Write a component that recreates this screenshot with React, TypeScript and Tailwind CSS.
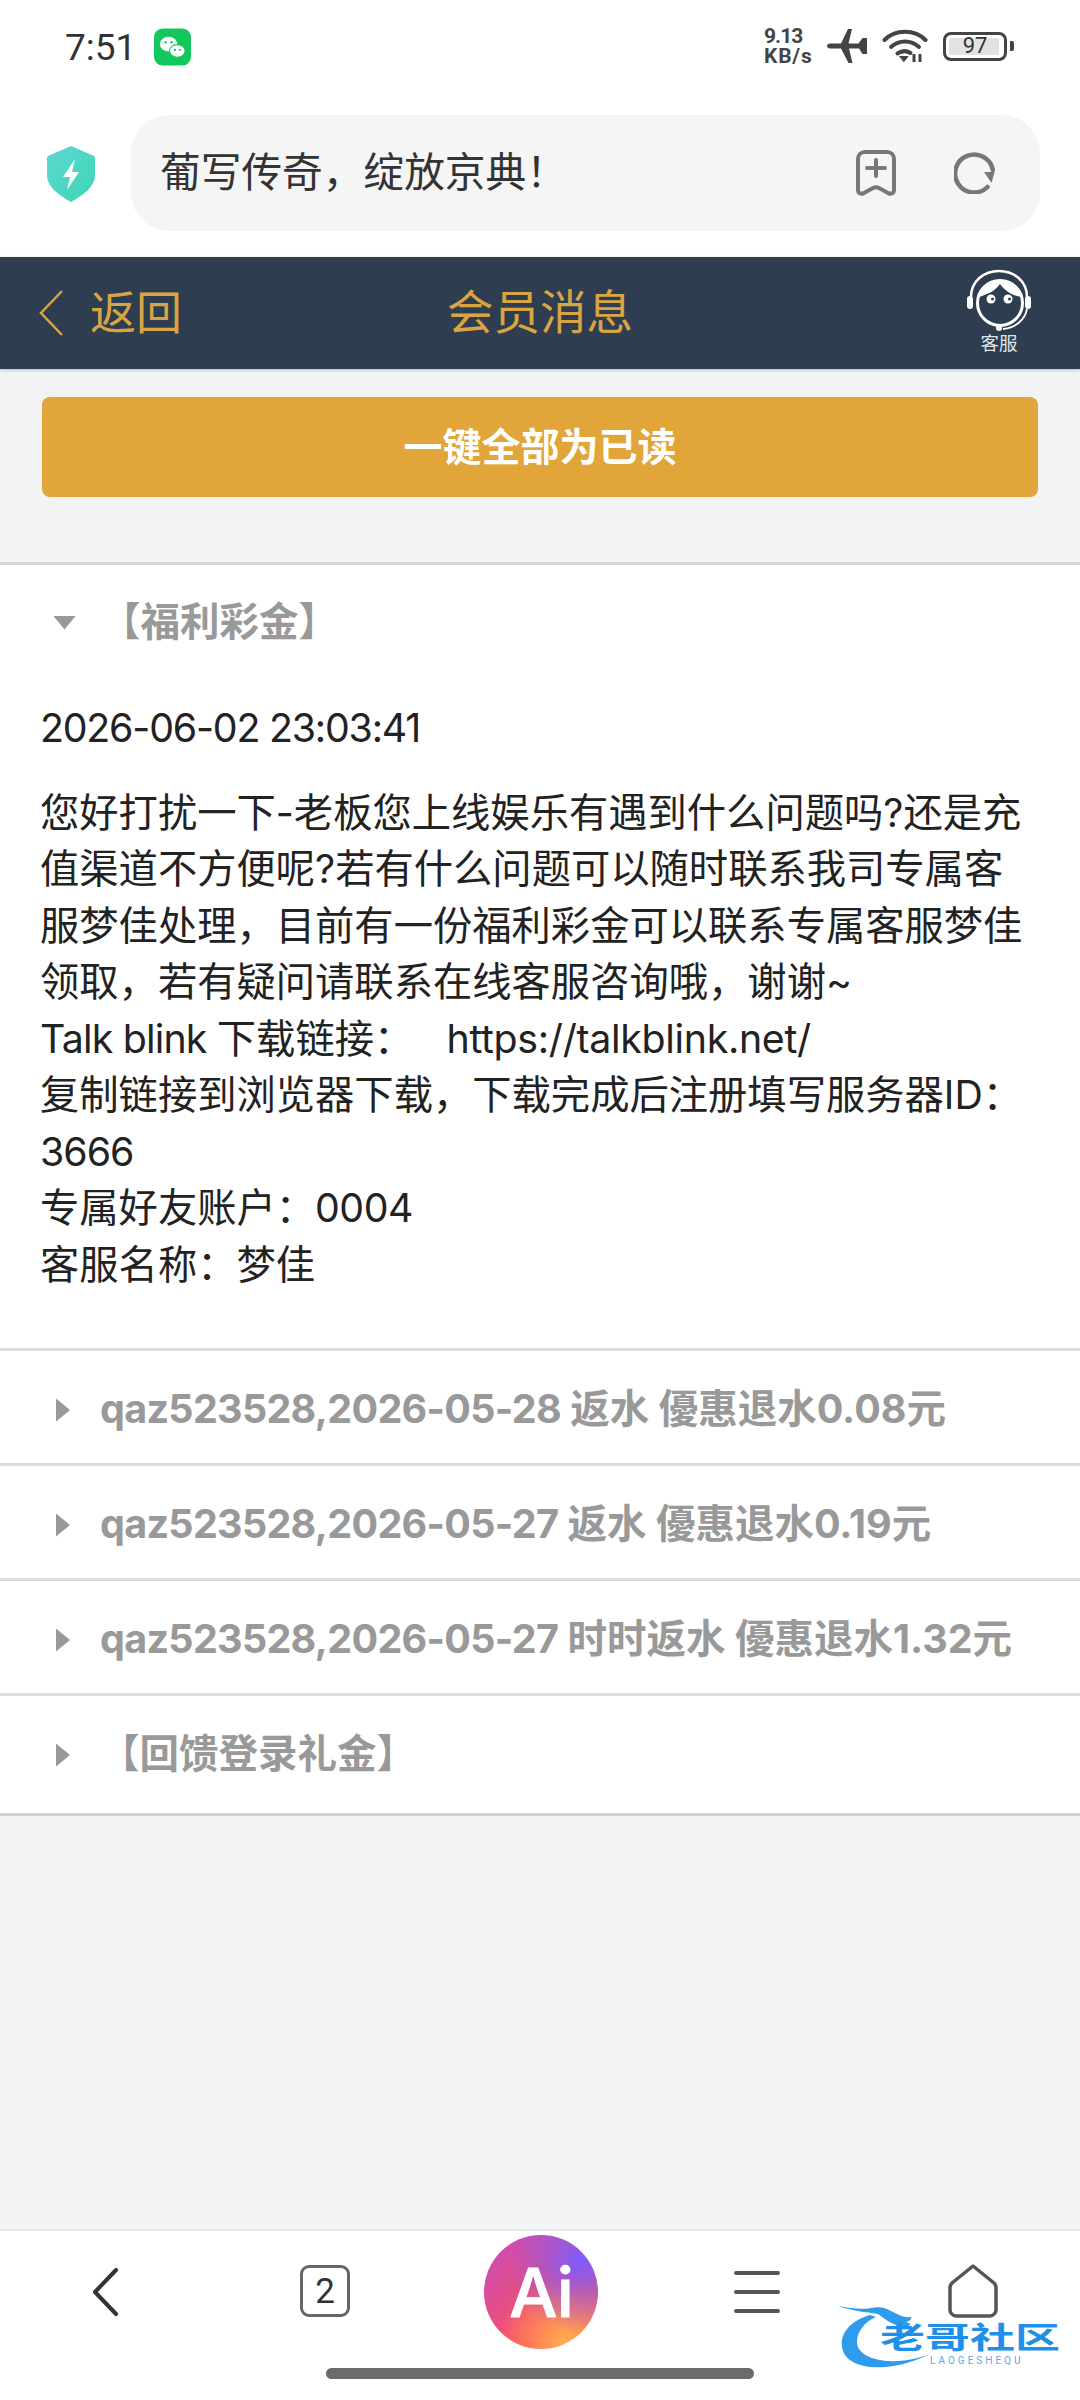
const cjk = "font-['Inter','Noto_Sans_CJK_SC',sans-serif]";

const rows = [
  { head: "qaz523528,2026-05-28", tail: " 返水 優惠退水0.08元" },
  { head: "qaz523528,2026-05-27", tail: " 返水 優惠退水0.19元" },
  { head: "qaz523528,2026-05-27", tail: " 时时返水 優惠退水1.32元" },
  { head: "", tail: "【回馈登录礼金】" },
];

const StatusBar = () => (
  <div className="h-[115px] shrink-0 flex items-start justify-between pl-[65px] pr-[66px] pt-[28px]">
    <div className="flex items-center gap-[18px] h-[38px]">
      <span className="text-[37px] leading-none text-[#333] font-['Roboto',sans-serif]">7:51</span>
      <svg width="37" height="38" viewBox="0 0 38 38">
        <rect width="38" height="38" rx="9" fill="#12c75c" />
        <ellipse cx="15" cy="16" rx="9" ry="7.500" fill="#fff" />
        <ellipse cx="24" cy="23" rx="8" ry="6.500" fill="#fff" stroke="#12c75c" strokeWidth="1.200" />
        <circle cx="12" cy="14" r="1.200" fill="#12c75c" />
        <circle cx="18" cy="14" r="1.200" fill="#12c75c" />
        <circle cx="21.500" cy="22" r="1.100" fill="#12c75c" />
        <circle cx="26.500" cy="22" r="1.100" fill="#12c75c" />
      </svg>
    </div>
    <div className="flex items-center h-[38px] mt-[-1px]">
      <div className="w-[52px] text-[21px] leading-[20px] font-bold text-[#444] font-['Roboto',sans-serif] mr-[10px]">
        <div className="tracking-[-1px]">9.13</div>
        <div className="tracking-[0.8px]">KB/s</div>
      </div>
      <svg width="42" height="36" viewBox="0 0 42 36" className="mr-[14px]">
        <path d="M1 18c0-1.600 1.600-2.600 3-2.600h11L22 1h4l-3.500 14.400h10L36.500 10H41v16h-4.500L33 20.500H23L26.500 35h-4L15 20.500H4C2.600 20.500 1 19.600 1 18z" fill="#444" />
      </svg>
      <svg width="46" height="34" viewBox="0 0 46 34" className="mr-[15px]" fill="none" stroke="#444" strokeWidth="4" strokeLinecap="round">
        <path d="M2.500 11C13 0 33 0 43.500 11" />
        <path d="M9 18c8-7.500 20-7.500 28 0" />
        <path d="M15.500 24.500c4.500-3 9-3 13 -.5" />
        <path d="M18 27.500h8l-4 5z" fill="#444" strokeWidth="1" />
        <path d="M32 25v8M38 25v8" strokeWidth="3" strokeLinecap="butt" />
      </svg>
      <div className="w-[64px] h-[29px] rounded-[8px] border-[3px] border-[#444] p-[3px] relative flex items-center justify-center">
        <div className="absolute left-[3px] top-[3px] bottom-[3px] right-[5px] rounded-[2px] bg-[#e2e2e2]" />
        <span className="relative text-[22px] leading-none text-[#333] font-['Roboto',sans-serif]">97</span>
      </div>
      <div className="w-[4px] h-[10px] rounded-r-[2px] bg-[#444] ml-[3px]" />
    </div>
  </div>
);

const AddressBar = () => (
  <div className="h-[142px] shrink-0 flex items-start pl-[47px] pr-[40px] bg-white">
    <svg width="48" height="56" viewBox="0 0 48 56" className="mt-[31px] mr-[36px] shrink-0">
      <defs>
        <linearGradient id="shield" x1="0" y1="0" x2="1" y2="1">
          <stop offset="0" stopColor="#5dd8d2" />
          <stop offset="1" stopColor="#3dd6b4" />
        </linearGradient>
      </defs>
      <path d="M24 0l22 9.500c1 .4 2 1.200 2 2.500v17C48 42 34 50 24 56 14 50 0 42 0 29V12c0-1.300 1-2.100 2-2.500z" fill="url(#shield)" />
      <path d="M28 13L16 31h7l-3 13 12-18h-7z" fill="#fff" />
    </svg>
    <div className="w-[909px] h-[116px] rounded-[38px] bg-[#f5f5f5] flex items-center pl-[29px] pr-[44px]">
      <span className={`flex-1 text-[40.700px] leading-none text-[#333] ${cjk}`}>葡写传奇，绽放京典！</span>
      <svg width="40" height="46" viewBox="0 0 40 46" fill="none" stroke="#777" strokeWidth="4" strokeLinejoin="round" strokeLinecap="round" className="mr-[58px]">
        <path d="M9 2h22c4 0 7 3 7 7v31c0 3-3 5-6 3l-9-5c-2-1-4-1-6 0l-9 5c-3 2-6 0-6-3V9c0-4 3-7 7-7z" />
        <path d="M20 10v16M11 18h18" />
      </svg>
      <svg width="42" height="42" viewBox="0 0 42 42" fill="none" stroke="#777" strokeWidth="4.500" strokeLinecap="round">
        <path d="M38.800 18A19 19 0 1 0 33.500 35" />
        <path d="M30 20h10.500l-3 11z" stroke="none" fill="#777" />
      </svg>
    </div>
  </div>
);

const AgentIcon = () => (
  <svg width="64" height="62" viewBox="0 0 64 62" fill="none" className="block">
    <path d="M4 28C4 12 17 2 32 2s28 10 28 26" stroke="#fff" strokeWidth="2.500" />
    <rect x="0" y="27" width="6" height="13" rx="3" fill="#fff" />
    <rect x="58" y="27" width="6" height="13" rx="3" fill="#fff" />
    <circle cx="33" cy="34" r="22.500" stroke="#fff" strokeWidth="3" />
    <path d="M11 28C20 26 28 22 33 15c5 7 13 12 22 13C53 17 44 11 33 11 22 11 13 17 11 28z" fill="#fff" />
    <circle cx="24" cy="30" r="4.500" fill="#fff" />
    <circle cx="41" cy="30" r="4.500" fill="#fff" />
    <circle cx="25.500" cy="30" r="1.500" fill="#2e3e50" />
    <circle cx="42.500" cy="30" r="1.500" fill="#2e3e50" />
    <path d="M60 40c-2 11-12 19-24 20" stroke="#fff" strokeWidth="1.800" />
    <circle cx="32" cy="59" r="3" fill="#fff" />
  </svg>
);

const Header = () => (
  <div className="h-[112px] shrink-0 bg-[#2e3e50] flex items-center justify-between relative shadow-[0_1px_3px_rgba(0,0,0,0.25)]">
    <div className="flex items-center pl-[38px]">
      <svg width="26" height="48" viewBox="0 0 26 48" fill="none" stroke="#d9a441" strokeWidth="2.500" className="mr-[26px]">
        <path d="M24 2L3 24l21 22" />
      </svg>
      <span className={`text-[46px] leading-none text-[#d9a441] mb-[2px] ${cjk}`}>返回</span>
    </div>
    <div className="absolute left-0 right-0 top-0 bottom-0 flex items-center justify-center pointer-events-none">
      <span className={`text-[46.500px] leading-none text-[#d9a441] mb-[2px] ${cjk}`}>会员消息</span>
    </div>
    <div className="flex flex-col items-center pr-[49px] mb-[4px]">
      <AgentIcon />
      <span className={`text-[18.500px] leading-none mt-[3px] text-[#dfe3e6] ${cjk}`}>客服</span>
    </div>
  </div>
);

const Tri = ({ open }: { open?: boolean }) =>
  open ? (
    <div className="ml-[53px] mr-[25px] w-[23px] h-[14px] bg-[#999] [clip-path:polygon(0_0,100%_0,50%_100%)]" />
  ) : (
    <div className="ml-[56px] mr-[30px] w-[14px] h-[23px] bg-[#999] [clip-path:polygon(0_0,100%_50%,0_100%)]" />
  );

const Messages = () => (
  <div className={`flex-1 bg-[#f2f3f5] ${cjk}`}>
    <div className="px-[42px] pt-[28px]">
      <div className="h-[100px] rounded-[8px] bg-[#e2a539] flex items-center justify-center text-[39px] font-bold text-white">
        一键全部为已读
      </div>
    </div>
    <div className="mt-[65px] border-t-[3px] border-[#d6d7da] bg-white">
      <div className="h-[115px] flex items-center text-[39.500px] font-bold text-[#999]">
        <Tri open />
        <span>【福利彩金】</span>
      </div>
      <div className="px-[40px] pt-[20px] pb-[55px] text-[39.300px] text-[#222] leading-[56.500px] whitespace-pre">
        <div className="mb-[28px] tracking-[-1.200px]">2026-06-02 23:03:41</div>
        <div>您好打扰一下-老板您上线娱乐有遇到什么问题吗?还是充</div>
        <div>值渠道不方便呢?若有什么问题可以随时联系我司专属客</div>
        <div>服梦佳处理，目前有一份福利彩金可以联系专属客服梦佳</div>
        <div>领取，若有疑问请联系在线客服咨询哦，谢谢~</div>
        <div>
          <span className="tracking-[-0.800px]">Talk blink </span>下载链接：   <span className="tracking-[-0.300px]">https://talkblink.net/</span>
        </div>
        <div>复制链接到浏览器下载，下载完成后注册填写服务器ID：</div>
        <div className="tracking-[-1px]">3666</div>
        <div>
          专属好友账户：<span className="tracking-[-0.500px]">0004</span>
        </div>
        <div>客服名称：梦佳</div>
      </div>
      {rows.map((r) => (
        <div key={r.head + r.tail} className="h-[115px] pt-[6px] border-t-[3px] border-[#dcdcdc] flex items-center text-[39.500px] font-bold text-[#999] whitespace-pre">
          <Tri />
          <span>
            <span className="tracking-[-0.700px]">{r.head}</span>
            {r.tail}
          </span>
        </div>
      ))}
      <div className="h-[5px]" />
      <div className="h-[3px] bg-[#cfcfcf]" />
    </div>
  </div>
);

const BottomNav = () => (
  <div className="h-[171px] shrink-0 bg-white border-t-[2px] border-[#e6e7ea] relative">
    <div className="flex items-start pt-[4px]">
      <div className="w-[92px] shrink-0" />
      <svg width="26" height="48" viewBox="0 0 26 48" fill="none" stroke="#333" strokeWidth="4" strokeLinecap="round" strokeLinejoin="round" className="mt-[33px] mr-[182px]">
        <path d="M24 2L3 24l21 22" />
      </svg>
      <div className="mt-[30px] mr-[134px] w-[50px] h-[52px] rounded-[9px] border-[3px] border-[#666] flex items-center justify-center text-[35px] leading-none text-[#333] font-['Roboto',sans-serif]">
        2
      </div>
      <div className="w-[114px] h-[114px] rounded-full bg-[radial-gradient(circle_at_85%_22%,#7c5cff_0%,transparent_55%),radial-gradient(circle_at_72%_95%,#ffb050_0%,transparent_50%),linear-gradient(135deg,#c44cc0,#ff4f5a_70%)] flex items-center justify-center mr-[136px]">
        <span className="text-[68px] font-medium leading-none text-white tracking-[-1px] [-webkit-text-stroke:1px_white] font-['Inter',sans-serif]">Ai</span>
      </div>
      <div className="mt-[36px] w-[46px] mr-[168px] flex flex-col gap-[15px]">
        <div className="h-[4px] rounded-full bg-[#555]" />
        <div className="h-[4px] rounded-full bg-[#555]" />
        <div className="h-[4px] rounded-full bg-[#555]" />
      </div>
      <svg width="50" height="54" viewBox="0 0 50 54" fill="none" stroke="#555" strokeWidth="3.500" strokeLinejoin="round" className="mt-[29px]">
        <path d="M25 2L4 19c-1.500 1.500-2 3-2 5v22c0 3 3 6 6 6h34c3 0 6-3 6-6V24c0-2-.500-3.500-2-5z" />
      </svg>
    </div>
    <div className="absolute left-[326px] top-[137px] w-[428px] h-[11px] rounded-full bg-[#6b6b6b]" />
    <div className="absolute left-[838px] top-[72px] w-[226px] h-[72px]">
      <svg width="100" height="70" viewBox="0 0 100 70" fill="none" className="absolute left-0 top-0">
        <path d="M32 12C10 18 0 34 5 48c6 18 44 24 87 3-32 12-62 8-71-5-6-10 2-26 17-32z" fill="#2f9bec" />
        <path d="M0 3c14 5 28 6 40 8 8 6 18 14 30 12 4-1 2-3-2-4 4-1 6-3 5-5-8 1-14-3-20-6-6-3-10-5-20-3-10 2-22 0-33-2z" fill="#2f9bec" />
      </svg>
      <div className={`absolute left-[42px] top-[19px] text-[30px] leading-none font-bold text-[#1e90ea] scale-x-[1.5] origin-left whitespace-nowrap ${cjk}`}>老哥社区</div>
      <div className="absolute left-[92px] top-[53px] text-[10px] leading-none text-[#5aa8e6] tracking-[3px] font-['Roboto',sans-serif]">LAOGESHEQU</div>
    </div>
  </div>
);

export default function App() {
  return (
    <div className="w-[1080px] h-[2400px] flex flex-col bg-white overflow-hidden">
      <StatusBar />
      <AddressBar />
      <Header />
      <Messages />
      <BottomNav />
    </div>
  );
}
